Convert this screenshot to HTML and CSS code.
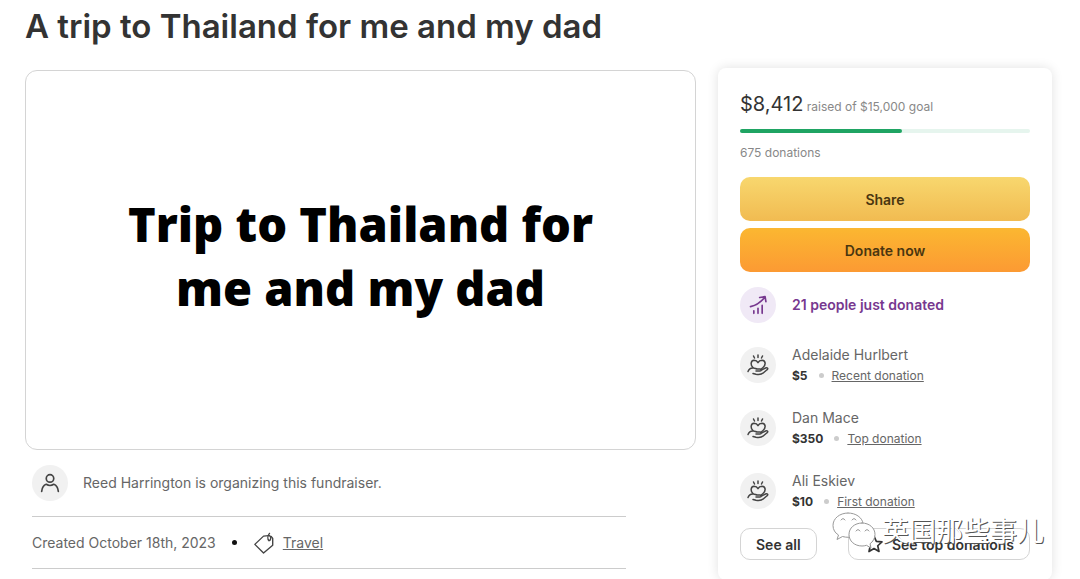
FILE: index.html
```html
<!DOCTYPE html>
<html lang="en">
<head>
    <meta charset="UTF-8">
    <meta name="viewport" content="width=device-width, initial-scale=1.0">
    <title>A trip to Thailand for me and my dad</title>
    <link rel="stylesheet" href="styles.css">
</head>
<body>
    <svg class="icon-defs" aria-hidden="true">
        <symbol id="heart-hand" viewBox="0 0 22 22">
            <path d="M11 1v2.500M6.500 2l1 2M15.500 2l-1 2"/>
            <path d="M6 13.500C3.500 11.500 3.300 6.500 7 6.200c2 0 3.300 1 4 2.400.7-1.400 2-2.400 4-2.400 4.200.3 3.800 5 1 7.300l-2 1.700"/>
            <path d="M1 17.500c1-2.600 3-3.800 5.500-3.500 1.500 0 2.500 1 4 1h2.500c1.600 0 1.600 2 0 2H9M14.500 16l4-2c2-.8 3 .6 1.500 1.800l-3.500 3c-2 1.700-4.500 2-7.500 1.400l-3-.7"/>
        </symbol>
    </svg>

    <div class="page">
        <h1>A trip to Thailand for me and my dad</h1>
        <div class="contents">

            <main class="campaign">
                <div class="cover">
                    <h2>Trip to Thailand for<br>me and my dad</h2>
                </div>
                <div class="details">
                    <div class="organizer">
                        <span class="avatar">
                            <svg viewBox="0 0 24 24"><circle cx="12" cy="6.500" r="4.500"/><path d="M2 22c.5-4.500 2.500-7.500 5.500-8.500 3 2 6 2 9 0 3 1 5 4 5.500 8.500"/></svg>
                        </span>
                        <span>Reed Harrington is organizing this fundraiser.</span>
                    </div>
                    <div class="created">
                        <span>Created October 18th, 2023</span>
                        <span class="dot"></span>
                        <a href="#" class="category">
                            <svg viewBox="0 0 24 24"><path d="M17 4l-5.500.5L2 13.500 11.500 23l10-8.500V7L20 5"/><path d="M17.500 9.500c-2-2-1.500-5.500.5-8M18.500 9c1.500-2 1-4-.5-5"/></svg>
                            <span>Travel</span>
                        </a>
                    </div>
                </div>
            </main>

            <aside class="sidebar">
                <p class="raised"><span class="amount">$8,412</span> raised of $15,000 goal</p>
                <div class="progress"><div class="progress-bar" style="width: 56%"></div></div>
                <p class="count">675 donations</p>
                <button type="button" class="btn btn-share">Share</button>
                <button type="button" class="btn btn-donate">Donate now</button>

                <div class="recent">
                    <span class="avatar avatar-purple">
                        <svg viewBox="0 0 24 24"><path d="M3 14c7-1.500 12-5 17-11M14 3l6.500-1 1 6M7 22v-3M12 22v-6M17 22V12.500"/></svg>
                    </span>
                    <strong>21 people just donated</strong>
                </div>

                <ul class="donors">
                    <li>
                        <span class="avatar"><svg><use href="#heart-hand"/></svg></span>
                        <div>
                            <p class="donor-name">Adelaide Hurlbert</p>
                            <p class="donor-info"><b>$5</b><i class="dot"></i><a href="#">Recent donation</a></p>
                        </div>
                    </li>
                    <li>
                        <span class="avatar"><svg><use href="#heart-hand"/></svg></span>
                        <div>
                            <p class="donor-name">Dan Mace</p>
                            <p class="donor-info"><b>$350</b><i class="dot"></i><a href="#">Top donation</a></p>
                        </div>
                    </li>
                    <li>
                        <span class="avatar"><svg><use href="#heart-hand"/></svg></span>
                        <div>
                            <p class="donor-name">Ali Eskiev</p>
                            <p class="donor-info"><b>$10</b><i class="dot"></i><a href="#">First donation</a></p>
                        </div>
                    </li>
                </ul>

                <div class="more">
                    <button type="button" class="btn-small">See all</button>
                    <button type="button" class="btn-small btn-top">
                        <svg viewBox="0 0 24 24"><path d="M12 2.500l2.800 6.300 6.800.7-5.100 4.600 1.500 6.900-6-3.600-6 3.600 1.500-6.900L2.400 9.500l6.800-.7z"/></svg>
                        See top donations
                    </button>
                </div>

                <div class="watermark">
                    <svg viewBox="0 0 44 36">
                        <path d="M16 1C7.500 1 1 6.500 1 13.500c0 4 2 7.500 5.500 9.500L5 27.500l5.500-3c2 .6 4 .8 6 .8"/>
                        <path d="M16 1c8 0 14 4.500 15 10"/>
                        <path d="M30 11c-7.500 0-13 5-13 11.500S22.500 34 30 34c1.500 0 3-.2 4.500-.7L39 36l-1-4.200c3-2.200 5-5.500 5-9.300C43 16 37.500 11 30 11z"/>
                        <path d="M9 8q2-3 4 0M20 8q2-3 4 0M24 19q2-3 4 0M33 19q2-3 4 0"/>
                    </svg>
                    <span lang="zh">英国那些事儿</span>
                </div>
            </aside>

        </div>
    </div>
</body>
</html>
```

FILE: styles.css
```css
* {
    box-sizing: border-box;
}

body {
    margin: 0;
    background: #fff;
    color: #333;
    font-family: "Inter", "Noto Sans CJK SC", sans-serif;
    font-size: 14px;
    line-height: 20px;
    overflow-x: hidden;
}

h1, h2, p, ul {
    margin: 0;
    padding: 0;
}

ul {
    list-style: none;
}

a {
    color: inherit;
}

svg {
    fill: none;
    stroke: currentColor;
    stroke-width: 2;
    stroke-linecap: round;
    stroke-linejoin: round;
}

.icon-defs {
    display: none;
}

.page {
    padding: 4px 28px 0 25px;
}

h1 {
    font-size: 33px;
    line-height: 44px;
    font-weight: 600;
    margin-bottom: 20px;
}

.contents {
    display: grid;
    grid-template-columns: minmax(0, 1fr) 334px;
    gap: 22px;
    align-items: start;
}

.cover {
    display: flex;
    align-items: center;
    justify-content: center;
    aspect-ratio: 671 / 380;
    margin-top: 2px;
    padding-bottom: 8px;
    border: 1px solid #d4d4d4;
    border-radius: 12px;
    text-align: center;
}

.cover h2 {
    color: #000;
    font-family: "Open Sans", sans-serif;
    font-size: 47px;
    line-height: 64px;
    font-weight: 800;
}

.details {
    margin: 0 70px 0 7px;
    color: #666;
}

.organizer {
    display: flex;
    align-items: center;
    gap: 15px;
    height: 67px;
    border-bottom: 1px solid #ccc;
}

.avatar {
    display: flex;
    flex: none;
    align-items: center;
    justify-content: center;
    width: 36px;
    height: 36px;
    border-radius: 50%;
    background: #f1f1f1;
    color: #444;
}

.avatar svg {
    width: 20px;
    height: 20px;
}

.donors .avatar svg {
    width: 22px;
    height: 22px;
    stroke-width: 1.5;
}

.created {
    display: flex;
    align-items: center;
    gap: 16px;
    height: 52px;
    border-bottom: 1px solid #ccc;
}

.dot {
    width: 5px;
    height: 5px;
    border-radius: 50%;
    background: #111;
}

.category {
    display: flex;
    align-items: center;
    gap: 8px;
}

.category svg {
    width: 22px;
    height: 22px;
    color: #444;
    stroke-width: 1.5;
}

.sidebar {
    position: relative;
    padding: 24px 22px 20px;
    border-radius: 8px;
    box-shadow: 0 0 12px rgba(0, 0, 0, 0.12);
}

.raised, .count {
    color: #888;
    font-size: 12px;
}

.raised {
    line-height: 24px;
}

.amount {
    color: #333;
    font-size: 20px;
}

.progress {
    height: 4px;
    margin: 10px 0;
    border-radius: 2px;
    background: #e6f5ee;
}

.progress-bar {
    height: 4px;
    border-radius: 2px;
    background: #1fa463;
}

.count {
    margin-bottom: 14px;
}

button {
    font-family: inherit;
    font-size: 14px;
    font-weight: 600;
    color: #333;
    cursor: pointer;
}

.btn {
    display: block;
    width: 100%;
    height: 44px;
    margin-bottom: 7px;
    border: 0;
    border-radius: 10px;
    color: #4a3610;
}

.btn-share {
    background: linear-gradient(#f8d76e, #f1bb51);
}

.btn-donate {
    background: linear-gradient(#fbb731, #fc9a33);
}

.recent {
    display: flex;
    align-items: center;
    gap: 16px;
    margin: 15px 0 10px;
    color: #77388f;
}

.recent strong {
    font-weight: 600;
}

.avatar-purple {
    background: #f0e9f6;
    color: #77388f;
}

.donors li {
    display: flex;
    align-items: center;
    gap: 16px;
    height: 63px;
}

.donor-name {
    color: #666;
    line-height: 21px;
}

.donor-info {
    display: flex;
    align-items: center;
    font-size: 12px;
    line-height: 21px;
}

.donor-info a {
    color: #666;
}

.donor-info .dot {
    margin: 0 8px 0 11px;
    background: #ccc;
}

.more {
    display: flex;
    justify-content: space-between;
    margin-top: 6px;
}

.btn-small {
    display: flex;
    align-items: center;
    gap: 8px;
    height: 32px;
    padding: 0 15px;
    border: 1px solid #d4d4d4;
    border-radius: 10px;
    background: #fff;
}

.btn-small svg {
    width: 20px;
    height: 20px;
}

/* account mark laid over the bottom of the card */
.watermark {
    position: absolute;
    right: 8px;
    bottom: 32px;
    display: flex;
    align-items: center;
    gap: 6px;
    color: #fff;
    font-family: "Noto Sans CJK SC", sans-serif;
    font-size: 27px;
    line-height: 36px;
    white-space: nowrap;
    text-shadow: 1px 1px 0 #555;
    pointer-events: none;
}

.watermark svg {
    width: 44px;
    height: 36px;
    fill: #fff;
    stroke: #999;
    stroke-width: 1;
}
```
